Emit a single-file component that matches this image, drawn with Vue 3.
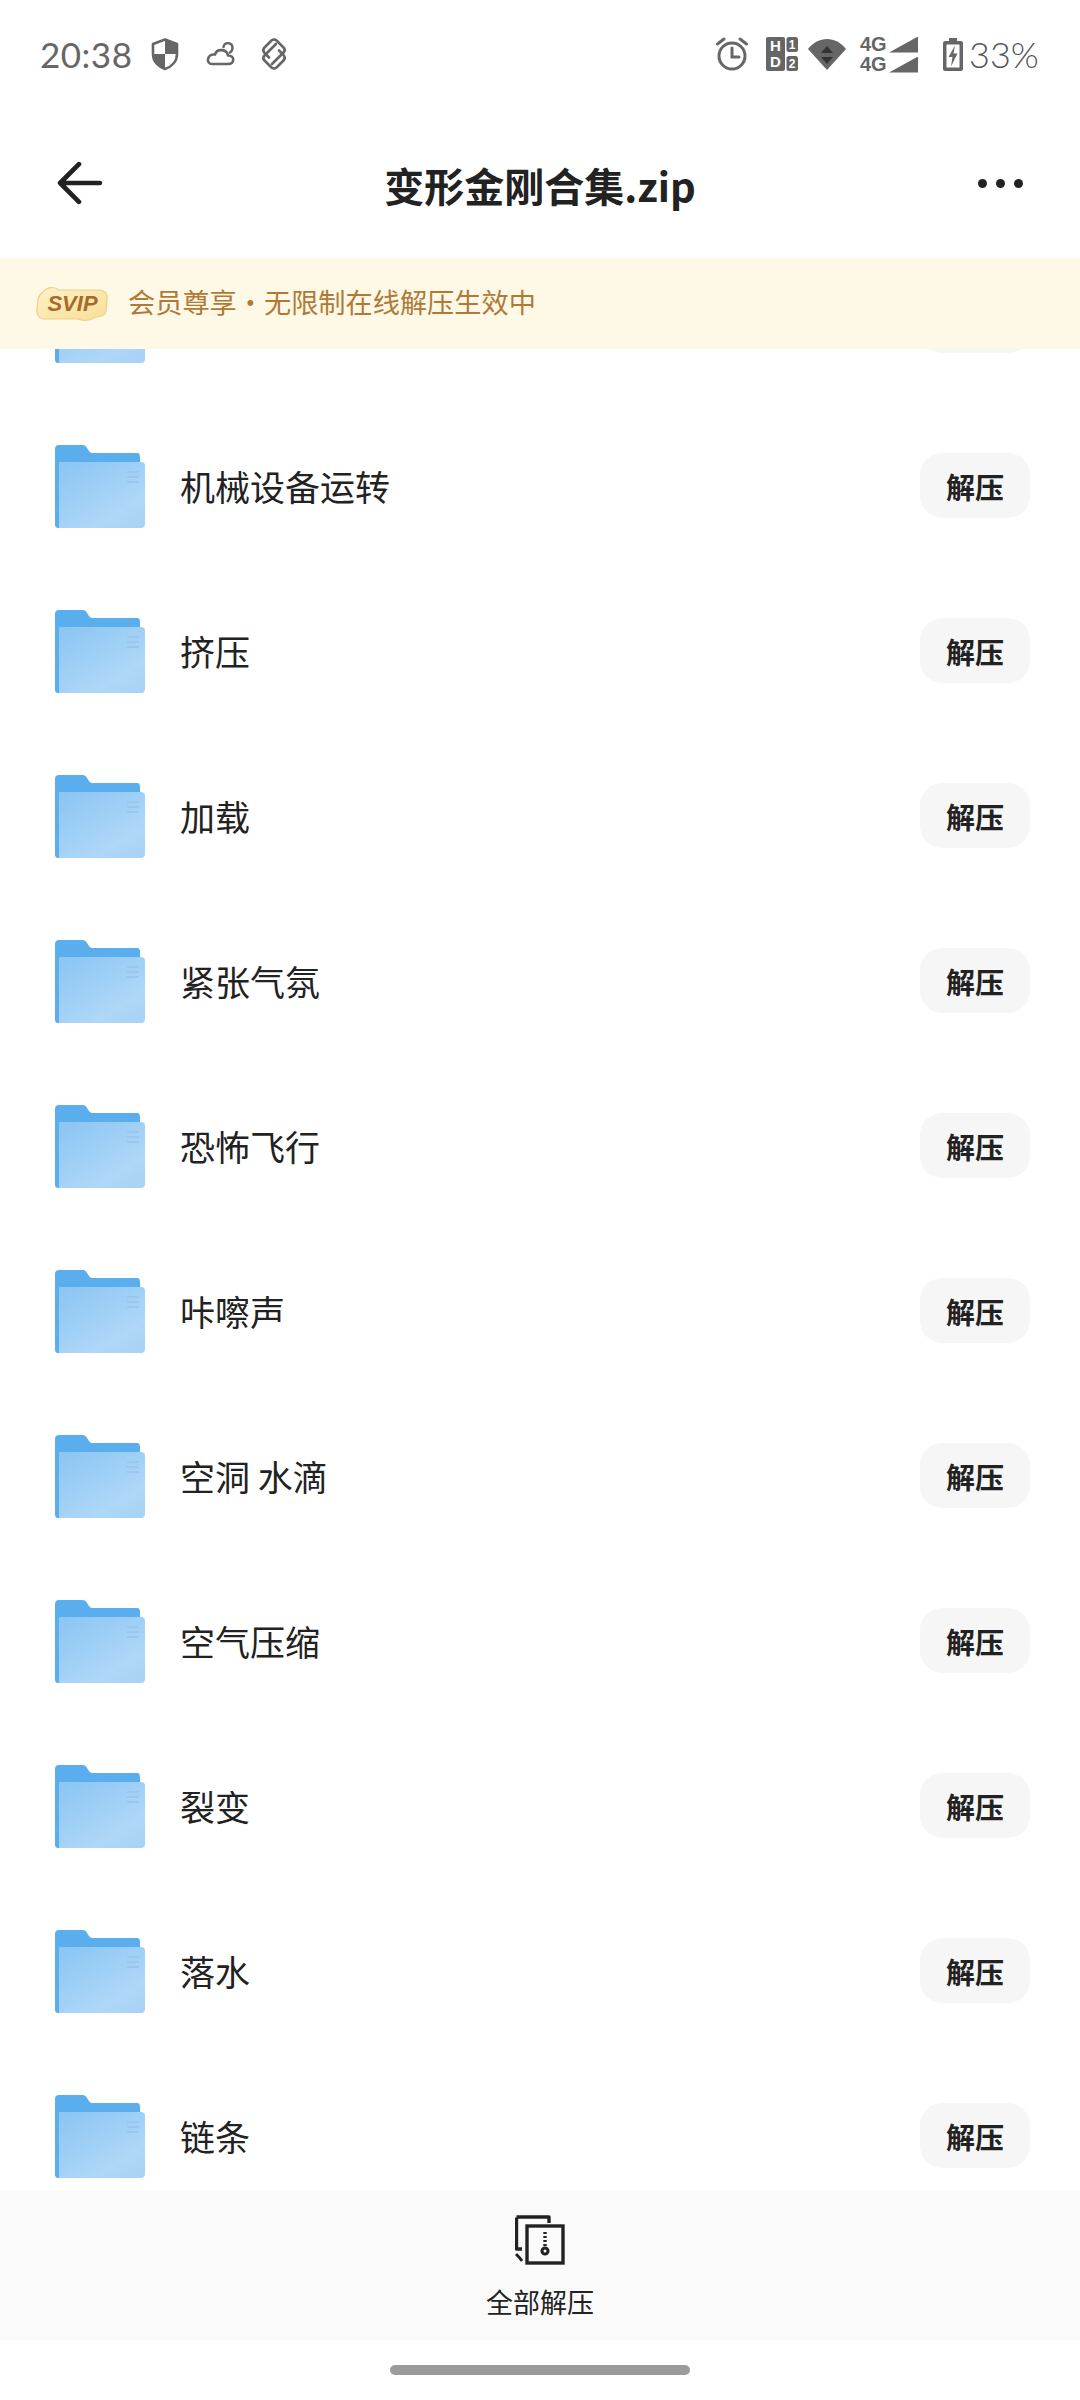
<script setup>
const rows = ['', '机械设备运转', '挤压', '加载', '紧张气氛', '恐怖飞行', '咔嚓声', '空洞 水滴', '空气压缩', '裂变', '落水', '链条']
</script>

<template>
  <div class="page">
    <header class="status">
      <div class="status-left">
        <span class="time">20:38</span>
        <svg class="si" viewBox="0 0 36 36">
          <path d="M18 3.5 L30 8 V18 C30 26 24 31 18 33 C12 31 6 26 6 18 V8 Z" fill="none" stroke="#666" stroke-width="2.6" stroke-linejoin="round"/>
          <path d="M18 3.5 L30 8 V18 H18 Z M18 18 V33 C12 31 6 26 6 18 Z" fill="#666"/>
        </svg>
        <svg class="si" viewBox="0 0 36 36">
          <path d="M10 28 H26 C33 28 33 19.500 26 19.500 C25 13 15 12 13 18.500 C5 17.500 3.500 28 10 28 Z" fill="none" stroke="#666" stroke-width="2.600" stroke-linejoin="round"/>
          <path d="M21.500 11 C22.500 5.500 30.500 6 30.500 12 C30.500 14 29.500 15.500 28 16.500" fill="none" stroke="#666" stroke-width="2.400" stroke-linecap="round"/>
        </svg>
        <svg class="si" viewBox="0 0 36 36" fill="none" stroke="#666" stroke-width="2.600" stroke-linejoin="round" stroke-linecap="round">
          <path d="M13 21.500 L8.500 17 Q6 14 8.500 11.500 L15.500 4.500 Q18 2.500 20.500 4.500 L27.500 11.500 Q30 14 27.500 16.500 L16 28"/>
          <path d="M23 14.500 L27.500 19 Q30 22 27.500 24.500 L20.500 31.500 Q18 33.500 15.500 31.500 L8.500 24.500 Q6 22 8.500 19.500 L20 8"/>
        </svg>
      </div>
      <div class="status-right">
        <svg class="alarm" viewBox="0 0 34 36" fill="none" stroke="#666" stroke-linecap="round">
          <circle cx="17" cy="20" r="13" stroke-width="3"/>
          <path d="M17 12 V21 H24" stroke-width="3"/>
          <path d="M2.500 8 L9 3 M31.500 8 L25 3" stroke-width="3"/>
        </svg>
        <svg class="hd" viewBox="0 0 32 34">
          <rect x="0" y="0" width="19" height="34" rx="2" fill="#666"/>
          <rect x="20.500" y="0" width="11.500" height="15" rx="2.500" fill="#666"/>
          <rect x="20.500" y="19" width="11.500" height="15" rx="2.500" fill="#666"/>
          <text x="9.500" y="13.500" class="hd-t big">H</text>
          <text x="9.500" y="30" class="hd-t big">D</text>
          <text x="26.200" y="12" class="hd-t small">1</text>
          <text x="26.200" y="31" class="hd-t small">2</text>
        </svg>
        <svg class="wifi" viewBox="0 0 38 32">
          <path d="M0 11 C10 -2.500 28 -2.500 38 11 L19 32 Z" fill="#666"/>
          <path d="M19 8 L25 15 H13 Z" fill="#333"/>
          <path d="M19 26 L25 19 H13 Z" fill="#333"/>
        </svg>
        <div class="net">
          <div class="net-row"><span class="g">4G</span><span class="tri"></span></div>
          <div class="net-row"><span class="g">4G</span><span class="tri"></span></div>
        </div>
        <svg class="batt" viewBox="0 0 20 33">
          <path d="M6 0 H14 V3 H18 C19 3 20 4 20 5 V31 C20 32 19 33 18 33 H2 C1 33 0 32 0 31 V5 C0 4 1 3 2 3 H6 Z" fill="#666"/>
          <rect x="3.500" y="6.500" width="13" height="23" fill="#fff"/>
          <path d="M12 7.500 L5.500 19 H9.500 L8 28.500 L14.500 15.500 H10.500 Z" fill="#666"/>
        </svg>
        <span class="pct">33%</span>
      </div>
    </header>

    <nav class="nav">
      <svg class="back" viewBox="0 0 44 42" fill="none" stroke="#222" stroke-width="4.500" stroke-linecap="round" stroke-linejoin="round">
        <path d="M21 3 L3 21 L21 39 M4 21 H41"/>
      </svg>
      <h1 class="title">变形金刚合集.zip</h1>
      <div class="dots"><i></i><i></i><i></i></div>
    </nav>

    <div class="banner">
      <span class="badge">
        <svg class="badge-bg" viewBox="0 0 73 36">
          <defs>
            <linearGradient id="bg" x1="0" y1="0" x2="1" y2="1">
              <stop offset="0" stop-color="#fdf2cc"/>
              <stop offset="1" stop-color="#f9dd94"/>
            </linearGradient>
          </defs>
          <path d="M7 6 C11 1 18 0 23 4 H63 C69 4 72 8 71 14 L70 25 C69 30 65 31 60 31 C54 35 47 35 42 33 H9 C3 33 0 29 1 23 L2 13 C3 9 4 8 7 6 Z" fill="url(#bg)" stroke="#f0d184" stroke-width="1.200"/>
        </svg>
        <span class="badge-t">SVIP</span>
      </span>
      <span class="banner-t">会员尊享·无限制在线解压生效中</span>
    </div>

    <main class="list">
      <div v-for="(name, i) in rows" :key="i" class="row">
        <svg class="folder" viewBox="0 0 90 83">
          <defs>
            <linearGradient :id="'f' + i" x1="0.1" y1="0" x2="0.9" y2="1">
              <stop offset="0" stop-color="#8cc6f3"/>
              <stop offset="0.75" stop-color="#aed7f8"/>
              <stop offset="1" stop-color="#a8d3f6"/>
            </linearGradient>
          </defs>
          <path d="M0 4 C0 1.500 1.500 0 4 0 H27 C30 0 31 1 32 3 L34 6 C35 7.500 36 8 38 8 H82 C84.500 8 85 10 85 12 V30 H0 Z" fill="#5aaeee"/>
          <path d="M0 14 H4 V83 H3 C1 83 0 81.500 0 80 Z" fill="#5aaeee"/>
          <path d="M5 17 H86 C88.500 17 90 18.500 90 20.500 V79 C90 81.500 88.500 83 86 83 H4 V18 C4 17.500 4.500 17 5 17 Z" :fill="'url(#f' + i + ')'"/>
          <path d="M72 27 H84 M72 32 H84 M72 37 H84" stroke="#9cc7ec" stroke-width="2"/>
        </svg>
        <span class="label">{{ name }}</span>
        <button class="btn">{{ name ? '解压' : '' }}</button>
      </div>
    </main>

    <footer class="bottom">
      <svg class="zip" viewBox="0 0 50 50" fill="none">
        <path d="M1.500 1 H34 V7 M7 33 H1.500 V1.500" stroke="#222" stroke-width="3.400" stroke-linejoin="round" transform="translate(0 1)"/>
        <rect x="12" y="11" width="36" height="37" stroke="#222" stroke-width="3.400"/>
        <path d="M30 17 V31" stroke="#222" stroke-width="3.400" stroke-dasharray="2 2"/>
        <circle cx="30" cy="36" r="3" stroke="#222" stroke-width="3"/>
        <path d="M1 39 C3 41 5 43 7 46" stroke="#222" stroke-width="3"/>
      </svg>
      <span class="bottom-t">全部解压</span>
    </footer>
    <div class="home-area"><div class="home"></div></div>
  </div>
</template>

<style scoped>
.page {
  width: 1080px;
  height: 2400px;
  background: #fff;
  display: flex;
  flex-direction: column;
  overflow: hidden;
  font-family: "Noto Sans CJK SC", "Noto Sans", sans-serif;
  color: #222;
}
.status {
  height: 100px;
  flex: none;
  display: flex;
  justify-content: space-between;
  align-items: center;
  padding: 8px 40px 0;
  box-sizing: border-box;
}
.status-left { display: flex; align-items: center; gap: 18.5px; }
.time {
  font-family: Lato, "Open Sans", sans-serif;
  font-size: 35px;
  color: #666;
  width: 91px;
  margin-right: -2.500px;
  letter-spacing: 0.5px;
}
.si { width: 36px; height: 36px; }
.status-right { display: flex; align-items: center; }
.alarm { width: 34px; height: 36px; }
.hd { width: 32px; height: 34px; margin-left: 17px; }
.hd-t { text-anchor: middle; font-family: "Liberation Sans", sans-serif; font-weight: 700; fill: #fff; }
.big { font-size: 15px; }
.small { font-size: 12px; }
.wifi { width: 38px; height: 32px; margin-left: 10px; }
.net { margin-left: 14px; width: 58px; display: flex; flex-direction: column; gap: 3px; }
.net-row { display: flex; align-items: flex-end; justify-content: space-between; height: 17px; }
.g {
  font-family: "Liberation Sans", sans-serif;
  font-weight: 700;
  font-size: 20px;
  line-height: 17px;
  color: #666;
}
.tri {
  width: 29px;
  height: 16px;
  background: #666;
  clip-path: polygon(100% 0, 100% 100%, 0 100%);
}
.batt { width: 20px; height: 33px; margin-left: 25px; }
.pct {
  font-family: Lato, "Open Sans", sans-serif;
  font-weight: 300;
  font-size: 36px;
  color: #555;
  margin-left: 6px;
  width: 71px;
}
.nav {
  height: 158px;
  flex: none;
  position: relative;
  display: flex;
  align-items: center;
  justify-content: space-between;
  padding: 8px 57px 0 57px;
  box-sizing: border-box;
}
.back { width: 46px; height: 44px; }
.title {
  margin: 0;
  position: absolute;
  left: 0;
  right: 0;
  top: 58px;
  text-align: center;
  font-size: 40px;
  line-height: 54px;
  font-weight: 700;
  color: #222;
}
.dots { display: flex; gap: 9px; }
.dots i { width: 9px; height: 9px; border-radius: 50%; background: #222; display: block; }
.banner {
  height: 91px;
  flex: none;
  position: relative;
  z-index: 2;
  background: #fef8e6;
  display: flex;
  align-items: center;
  padding-left: 36px;
  box-sizing: border-box;
}
.badge {
  position: relative;
  width: 73px;
  height: 36px;
  display: flex;
  align-items: center;
  justify-content: center;
  margin-right: 19px;
}
.badge-bg { position: absolute; inset: 0; width: 100%; height: 100%; }
.badge-t {
  position: relative;
  font-family: "Liberation Sans", sans-serif;
  font-weight: 700;
  font-style: italic;
  font-size: 22px;
  color: #a66b28;
}
.banner-t { font-size: 27.2px; color: #b07a36; margin-top: -5px; }
.list {
  flex: 1;
  min-height: 0;
  overflow: hidden;
}
.row {
  height: 165px;
  flex: none;
  display: flex;
  align-items: center;
  padding: 0 50px 0 55px;
  box-sizing: border-box;
}
.row:first-child { margin-top: -110px; }
.folder { width: 90px; height: 83px; flex: none; }
.label { margin-left: 35px; font-size: 35px; color: #222; flex: 1; margin-top: -3px; }
.btn {
  width: 110px;
  height: 65px;
  border: 0;
  border-radius: 22px;
  background: #f6f6f6;
  font-family: inherit;
  font-size: 29px;
  font-weight: 700;
  color: #222;
  padding: 0;
  margin-top: -2px;
}
.bottom {
  height: 150px;
  flex: none;
  background: #fafafa;
  display: flex;
  flex-direction: column;
  align-items: center;
  box-sizing: border-box;
  padding-top: 25px;
}
.zip { width: 50px; height: 50px; }
.bottom-t { font-size: 27px; line-height: 38px; margin-top: 18px; color: #222; }
.home-area {
  height: 60px;
  flex: none;
  display: flex;
  justify-content: center;
  padding-top: 25px;
  box-sizing: border-box;
}
.home { width: 300px; height: 10px; border-radius: 5px; background: #9b9b9b; }
</style>
